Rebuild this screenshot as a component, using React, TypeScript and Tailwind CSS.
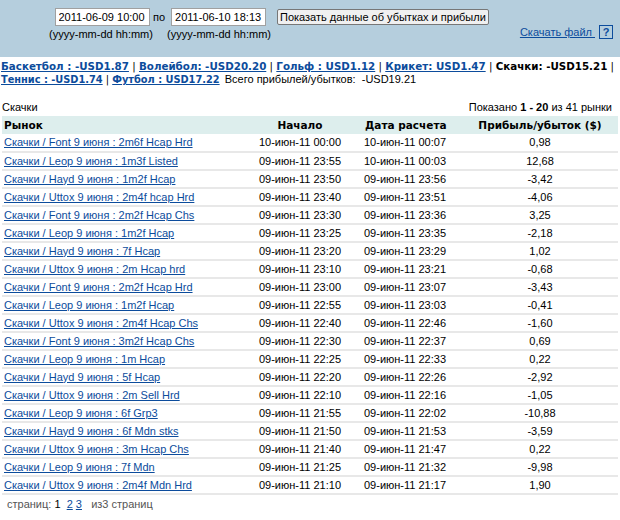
import React from "react";

const rows = [
  ["Скачки / Font 9 июня : 2m6f Hcap Hrd", "10-июн-11 00:00", "10-июн-11 00:07", "0,98"],
  ["Скачки / Leop 9 июня : 1m3f Listed", "09-июн-11 23:55", "10-июн-11 00:03", "12,68"],
  ["Скачки / Hayd 9 июня : 1m2f Hcap", "09-июн-11 23:50", "09-июн-11 23:56", "-3,42"],
  ["Скачки / Uttox 9 июня : 2m4f hcap Hrd", "09-июн-11 23:40", "09-июн-11 23:51", "-4,06"],
  ["Скачки / Font 9 июня : 2m2f Hcap Chs", "09-июн-11 23:30", "09-июн-11 23:36", "3,25"],
  ["Скачки / Leop 9 июня : 1m2f Hcap", "09-июн-11 23:25", "09-июн-11 23:35", "-2,18"],
  ["Скачки / Hayd 9 июня : 7f Hcap", "09-июн-11 23:20", "09-июн-11 23:29", "1,02"],
  ["Скачки / Uttox 9 июня : 2m Hcap hrd", "09-июн-11 23:10", "09-июн-11 23:21", "-0,68"],
  ["Скачки / Font 9 июня : 2m2f Hcap Hrd", "09-июн-11 23:00", "09-июн-11 23:07", "-3,43"],
  ["Скачки / Leop 9 июня : 1m2f Hcap", "09-июн-11 22:55", "09-июн-11 23:03", "-0,41"],
  ["Скачки / Uttox 9 июня : 2m4f Hcap Chs", "09-июн-11 22:40", "09-июн-11 22:46", "-1,60"],
  ["Скачки / Font 9 июня : 3m2f Hcap Chs", "09-июн-11 22:30", "09-июн-11 22:37", "0,69"],
  ["Скачки / Leop 9 июня : 1m Hcap", "09-июн-11 22:25", "09-июн-11 22:33", "0,22"],
  ["Скачки / Hayd 9 июня : 5f Hcap", "09-июн-11 22:20", "09-июн-11 22:26", "-2,92"],
  ["Скачки / Uttox 9 июня : 2m Sell Hrd", "09-июн-11 22:10", "09-июн-11 22:16", "-1,05"],
  ["Скачки / Leop 9 июня : 6f Grp3", "09-июн-11 21:55", "09-июн-11 22:02", "-10,88"],
  ["Скачки / Hayd 9 июня : 6f Mdn stks", "09-июн-11 21:50", "09-июн-11 21:53", "-3,59"],
  ["Скачки / Uttox 9 июня : 3m Hcap Chs", "09-июн-11 21:40", "09-июн-11 21:47", "0,22"],
  ["Скачки / Leop 9 июня : 7f Mdn", "09-июн-11 21:25", "09-июн-11 21:32", "-9,98"],
  ["Скачки / Uttox 9 июня : 2m4f Mdn Hrd", "09-июн-11 21:10", "09-июн-11 21:17", "1,90"],
];

const link = "text-[#0c4c9c] underline";

const Sport = ({ label }: { label: string }) => (
  <a href="#" className={`${link} font-bold`}>
    {label}
  </a>
);

export default function App() {
  return (
    <div className="w-[620px] h-[520px] bg-white text-[11px] leading-[13px] text-black font-['Liberation_Sans',Arial,sans-serif]">
      {/* фильтр */}
      <div className="h-[57px] bg-[#b5cedd] flex pt-[8px]">
        <div className="flex flex-col items-center ml-[50px] w-[100px]">
          <input
            readOnly
            value="2011-06-09 10:00"
            className="w-[95px] h-[18px] ml-[4px] bg-white border border-[#a0a0a0] px-[3px] text-[11px] outline-none"
          />
          <span className="mt-[2px] ml-[2px] whitespace-nowrap">(yyyy-mm-dd hh:mm)</span>
        </div>
        <span className="ml-[3px] mt-[3px]">по</span>
        <div className="flex flex-col ml-[5px]">
          <input
            readOnly
            value="2011-06-10 18:13"
            className="w-[95px] h-[18px] ml-[1px] bg-white border border-[#a0a0a0] px-[3px] text-[11px] outline-none"
          />
          <span className="mt-[2px] -ml-[3px] whitespace-nowrap">(yyyy-mm-dd hh:mm)</span>
        </div>
        <div className="flex flex-col items-end flex-1 mr-[7px]">
          <div className="w-full flex">
            <button className="ml-[6px] mt-[1px] h-[16px] px-[2px] bg-[#f0f0f0] border border-[#777] rounded-[2px] text-[11px] leading-[13px]">
              Показать данные об убытках и прибыли
            </button>
          </div>
          <div className="flex items-center">
            <a href="#" className={`${link} mt-[1px]`}>
              Скачать файл&nbsp;
            </a>
            <span className="ml-[4px] w-[14px] h-[14px] border border-[#0c4c9c] text-[#0c4c9c] font-bold flex items-center justify-center text-[11px]">
              ?
            </span>
          </div>
        </div>
      </div>

      {/* итоги по видам спорта */}
      <div className="px-[1px] pt-[3px] font-['DejaVu_Sans',sans-serif] text-[10.3px]">
        <div className="whitespace-nowrap">
          <Sport label="Баскетбол : -USD1.87" /> | <Sport label="Волейбол: -USD20.20" /> |{" "}
          <Sport label="Гольф : USD1.12" /> | <Sport label="Крикет: USD1.47" /> |{" "}
          <b>Скачки: -USD15.21</b> |
        </div>
        <div className="whitespace-nowrap text-[9.8px]">
          <Sport label="Теннис : -USD1.74" /> | <Sport label="Футбол : USD17.22" />{" "}
          <span className="font-['Liberation_Sans',sans-serif] text-[11px] ml-[2px]">
            Всего прибылей/убытков:&nbsp; -USD19.21
          </span>
        </div>
      </div>

      <div className="flex justify-between px-[2px] mr-[6px] mt-[15px]">
        <span>Скачки</span>
        <span>
          Показано <b>1 - 20</b> из 41 рынки
        </span>
      </div>

      <table className="ml-[2px] mt-[2px] w-[616px] border-collapse table-fixed">
        <colgroup>
          <col className="w-[238px]" />
          <col className="w-[120px]" />
          <col className="w-[102px]" />
          <col className="w-[156px]" />
        </colgroup>
        <thead>
          <tr className="bg-[#ddeeed] h-[18px] font-['DejaVu_Sans',sans-serif] text-[10.5px]">
            <th className="text-left pl-[2px] font-bold">Рынок</th>
            <th className="text-center font-bold">Начало</th>
            <th className="text-left pl-[5px] font-bold">Дата расчета</th>
            <th className="text-center font-bold">Прибыль/убыток ($)</th>
          </tr>
        </thead>
        <tbody>
          {rows.map((r, i) => (
            <tr key={i} className="h-[18px] border-b-2 border-[#e8e8e8]">
              <td className="pl-[2px] whitespace-nowrap">
                <a href="#" className={link}>
                  {r[0]}
                </a>
              </td>
              <td className="text-center">{r[1]}</td>
              <td className="pl-[4px]">{r[2]}</td>
              <td className="text-center">{r[3]}</td>
            </tr>
          ))}
        </tbody>
      </table>

      <div className="pl-[7px] mt-[3px] text-[#555]">
        страниц: <span className="text-black">1</span>&nbsp;{" "}
        <a href="#" className={link}>
          2
        </a>{" "}
        <a href="#" className={link}>
          3
        </a>
        &nbsp;&nbsp; из3 страниц
      </div>
    </div>
  );
}
